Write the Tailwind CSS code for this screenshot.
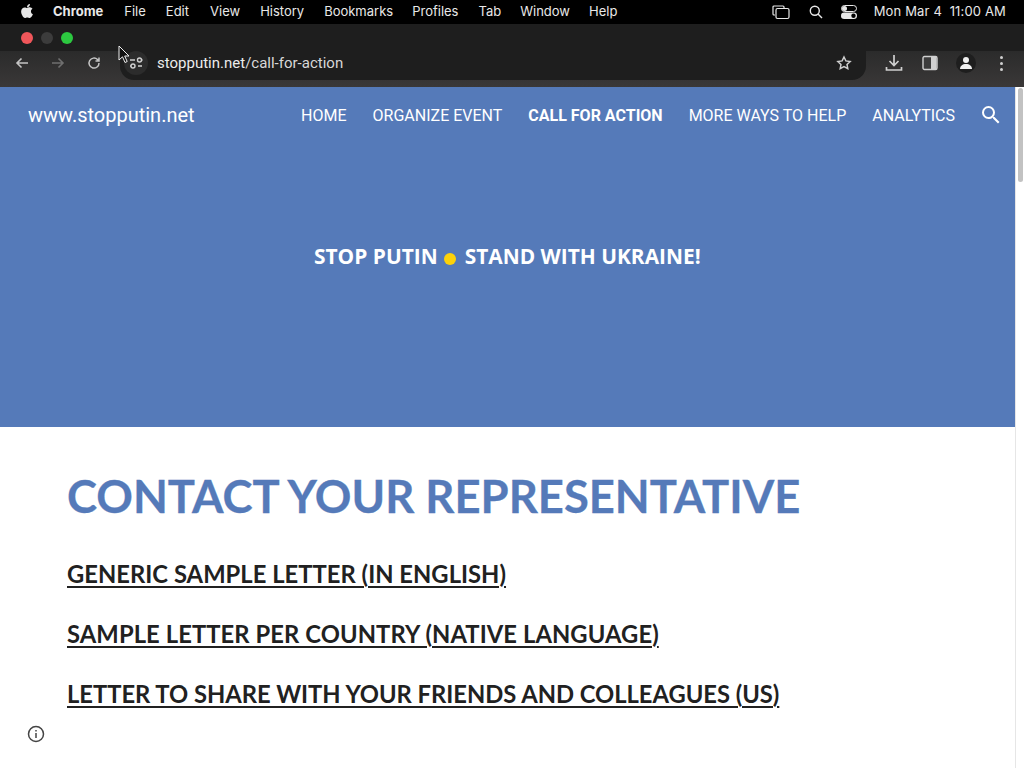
<!DOCTYPE html>
<html lang="en">
<head>
    <meta charset="UTF-8">
    <title>Call for action</title>
    <script src="https://cdn.jsdelivr.net/npm/@tailwindcss/browser@4"></script>
</head>
<body class="w-[1024px] h-[768px] overflow-hidden bg-white relative font-['Inter',sans-serif]">
    <!-- macOS menu bar -->
    <div class="h-6 bg-black text-[#e8e8e8] text-[13px] flex items-center">
        <svg class="ml-[20px] w-[14px] h-[16px] mb-[2px]" viewBox="0 0 384 512" fill="#e8e8e8"><path d="M318.700 268.700c-.2-36.700 16.400-64.400 50-84.800-18.800-26.900-47.200-41.700-84.700-44.600-35.500-2.800-74.300 20.700-88.500 20.700-15 0-49.400-19.700-76.400-19.700C63.300 141.200 4 184.800 4 273.500q0 39.300 14.400 81.200c12.800 36.700 59 126.700 107.200 125.200 25.200-.6 43-17.900 75.800-17.900 31.800 0 48.300 17.900 76.400 17.900 48.600-.7 90.400-82.500 102.600-119.300-65.200-30.700-61.700-90-61.700-91.900zm-56.600-164.200c27.300-32.400 24.800-61.900 24-72.500-24.100 1.400-52 16.400-67.900 34.900-17.500 19.800-27.800 44.300-25.600 71.900 26.100 2 49.900-11.400 69.500-34.300z"/></svg>
        <span class="ml-[19px] font-bold">Chrome</span>
        <span class="ml-[21px]">File</span>
        <span class="ml-[20px]">Edit</span>
        <span class="ml-[21px]">View</span>
        <span class="ml-[20px]">History</span>
        <span class="ml-[20px]">Bookmarks</span>
        <span class="ml-[19px]">Profiles</span>
        <span class="ml-[20px]">Tab</span>
        <span class="ml-[19px]">Window</span>
        <span class="ml-[19px]">Help</span>
        <div class="ml-auto flex items-center">
            <svg class="w-[18px] h-[16px]" viewBox="0 0 18 16" fill="none" stroke="#e8e8e8" stroke-width="1.200"><path d="M3 11H2a1 1 0 0 1-1-1V3a1 1 0 0 1 1-1h9a1 1 0 0 1 1 1v1"/><rect x="4" y="4.500" width="13" height="10" rx="1.500"/></svg>
            <svg class="w-[14px] h-[14px] ml-[19px]" viewBox="0 0 14 14" fill="none" stroke="#e8e8e8" stroke-width="1.400"><circle cx="5.800" cy="5.800" r="4.500"/><path d="M9 9l4 4"/></svg>
            <svg class="w-[16px] h-[14px] ml-[18px]" viewBox="0 0 16 14"><rect x="0.500" y="0.500" width="15" height="6" rx="3" fill="none" stroke="#e8e8e8"/><circle cx="3.500" cy="3.500" r="2.500" fill="#e8e8e8"/><rect x="0" y="7.500" width="16" height="6.500" rx="3.200" fill="#e8e8e8"/><circle cx="12.500" cy="10.700" r="2.200" fill="#000"/></svg>
            <span class="ml-[17px] mr-[18px] whitespace-pre tracking-[0.16px]">Mon Mar 4  11:00 AM</span>
        </div>
    </div>

    <!-- Browser chrome -->
    <div class="h-[27px] bg-[#1e1e1e] flex items-center pl-[21px] gap-[8px]">
        <span class="w-3 h-3 rounded-full bg-[#f0565a]"></span>
        <span class="w-3 h-3 rounded-full bg-[#3c3c3c]"></span>
        <span class="w-3 h-3 rounded-full bg-[#2cc840]"></span>
    </div>
    <div class="h-[36px] bg-gradient-to-b from-[#2b2b2b] to-[#3a3838] flex items-start">
        <svg class="w-4 h-4 ml-[14px] mt-[4px]" viewBox="0 0 16 16" fill="none" stroke="#c4c4c4" stroke-width="1.600"><path d="M14 8H3M7.500 3.500L3 8l4.500 4.500"/></svg>
        <svg class="w-4 h-4 ml-[20px] mt-[4px]" viewBox="0 0 16 16" fill="none" stroke="#6f6f6f" stroke-width="1.600"><path d="M2 8h11M8.500 3.500L13 8l-4.500 4.500"/></svg>
        <svg class="w-4 h-4 ml-[20px] mt-[4px]" viewBox="0 0 16 16" fill="none" stroke="#c4c4c4" stroke-width="1.500"><path d="M13 8a5 5 0 1 1-1.500-3.500L13 6M13 2.500V6H9.500"/></svg>
        <!-- address bar -->
        <div class="ml-[18px] w-[746px] h-[29px] bg-[#1e1e1e] rounded-br-[14px] rounded-bl-[14px] flex items-start text-[15px] leading-[24px] text-[#d8d8d8] font-['Roboto',sans-serif] relative">
            <span class="ml-[4px] w-[24px] h-[24px] rounded-full bg-[#2c2c2c] flex items-center justify-center">
                <svg class="w-4 h-4" viewBox="0 0 16 16" fill="none" stroke="#d0d0d0" stroke-width="1.400"><path d="M2 5h5M10 11h4"/><circle cx="11.500" cy="5" r="2"/><circle cx="5" cy="11" r="2"/><path d="M13.500 5h1M2 11h1"/></svg>
            </span>
            <span class="ml-[9px]"><span class="text-[#ececec]">stopputin.net</span>/call-for-action</span>
            <svg class="absolute right-[14px] top-[4px] w-4 h-4" viewBox="0 0 24 24" fill="none" stroke="#d0d0d0" stroke-width="2.200"><path d="M12 3l2.800 5.900 6.400.8-4.700 4.400 1.200 6.400L12 17.400l-5.700 3.100 1.200-6.400-4.700-4.400 6.400-.8z"/></svg>
        </div>
        <svg class="w-[18px] h-[18px] ml-[19px] mt-[3px]" viewBox="0 0 18 18" fill="none" stroke="#d0d0d0" stroke-width="1.700"><path d="M9 1v10M4.500 7L9 11.500 13.500 7M1.500 13v3h15v-3"/></svg>
        <svg class="w-[16px] h-[16px] ml-[19px] mt-[4px]" viewBox="0 0 16 16"><rect x="1" y="1.500" width="14" height="13" rx="1.500" fill="#3c3c3c" stroke="#d0d0d0" stroke-width="1.400"/><rect x="9" y="2" width="5.500" height="12" fill="#d0d0d0"/></svg>
        <span class="w-5 h-5 rounded-full bg-[#1e1e1e] ml-[18px] mt-[2px] flex items-center justify-center">
            <svg class="w-[14px] h-[14px]" viewBox="0 0 14 14" fill="#f0f0f0"><circle cx="7" cy="4" r="3"/><path d="M1 13c0-3 2.500-5 6-5s6 2 6 5z"/></svg>
        </span>
        <span class="ml-[24px] flex flex-col gap-[3px] mt-[5px]">
            <span class="w-[3px] h-[3px] rounded-full bg-[#d0d0d0]"></span>
            <span class="w-[3px] h-[3px] rounded-full bg-[#d0d0d0]"></span>
            <span class="w-[3px] h-[3px] rounded-full bg-[#d0d0d0]"></span>
        </span>
    </div>

    <!-- Page -->
    <div class="flex">
        <main class="w-[1015px]">
            <section class="h-[340px] bg-[#557ab9] text-white">
                <nav class="h-14 flex items-center font-['Roboto',sans-serif] text-[16px]">
                    <span class="ml-7 text-[20px]">www.stopputin.net</span>
                    <div class="ml-auto flex items-center gap-[26px] mr-[13px] pt-[1px]">
                        <span>HOME</span>
                        <span>ORGANIZE EVENT</span>
                        <span class="font-bold">CALL FOR ACTION</span>
                        <span>MORE WAYS TO HELP</span>
                        <span>ANALYTICS</span>
                        <svg class="w-6 h-6 -ml-[2px] -mr-[1px] -mt-[1px]" viewBox="0 0 24 24" fill="#fff"><path d="M15.500 14h-.790l-.280-.270A6.471 6.471 0 0 0 16 9.500 6.500 6.500 0 1 0 9.500 16c1.610 0 3.090-.590 4.230-1.570l.270.280v.790l5 4.990L20.490 19l-4.990-5zm-6 0C7.010 14 5 11.990 5 9.500S7.010 5 9.500 5 14 7.010 14 9.500 11.990 14 9.500 14z"/></svg>
                    </div>
                </nav>
                <p class="mt-[97px] pl-[314px] flex items-center font-['Open_Sans',sans-serif] font-bold text-[20.9px] leading-[32px] whitespace-pre">
                    <span>STOP PUTIN</span>
                    <span class="ml-[6px] mt-[6px] w-[12px] h-[12px] rounded-full bg-[#fdd20a]"></span>
                    <span class="ml-[9px]">STAND WITH UKRAINE!</span>
                </p>
            </section>
            <section class="pl-[67px] pt-[41px] font-['Lato',sans-serif]">
                <h1 class="text-[#557ab9] font-bold text-[45.35px] leading-[56px] [-webkit-text-stroke:0.3px_#557ab9]">CONTACT YOUR REPRESENTATIVE</h1>
                <h2 class="mt-[32px] text-[#212121] font-bold text-[23.75px] leading-[36px] underline decoration-[2px] underline-offset-[3px] tracking-[0.03px]">GENERIC SAMPLE LETTER (IN ENGLISH)</h2>
                <h2 class="mt-[24px] text-[#212121] font-bold text-[23.75px] leading-[36px] underline decoration-[2px] underline-offset-[3px] tracking-[0.09px]">SAMPLE LETTER PER COUNTRY (NATIVE LANGUAGE)</h2>
                <h2 class="mt-[24px] text-[#212121] font-bold text-[23.75px] leading-[36px] underline decoration-[2px] underline-offset-[3px] tracking-[-0.02px]">LETTER TO SHARE WITH YOUR FRIENDS AND COLLEAGUES (US)</h2>
            </section>
        </main>
        <!-- scrollbar -->
        <div class="w-[9px] h-[681px] bg-white border-l border-[#e6e6e6] pt-[1px]">
            <div class="ml-[2px] w-[5px] h-[94px] rounded-full bg-[#c2c2c2]"></div>
        </div>
    </div>

    <!-- Overlays: mouse pointer, info button -->
    <svg class="absolute left-[118px] top-[45px] w-[13px] h-[19px]" viewBox="0 0 13 19"><path d="M1 1v14l3.500-3.200L7 17.500l2.200-1-2.500-5.500H11z" fill="#111" stroke="#eee" stroke-width="1"/></svg>
    <svg class="absolute left-[27px] top-[725px] w-[18px] h-[18px]" viewBox="0 0 18 18" fill="none" stroke="#444" stroke-width="1.500"><circle cx="9" cy="9" r="7.500"/><path d="M9 8v5"/><path d="M9 5v1.500"/></svg>
</body>
</html>
